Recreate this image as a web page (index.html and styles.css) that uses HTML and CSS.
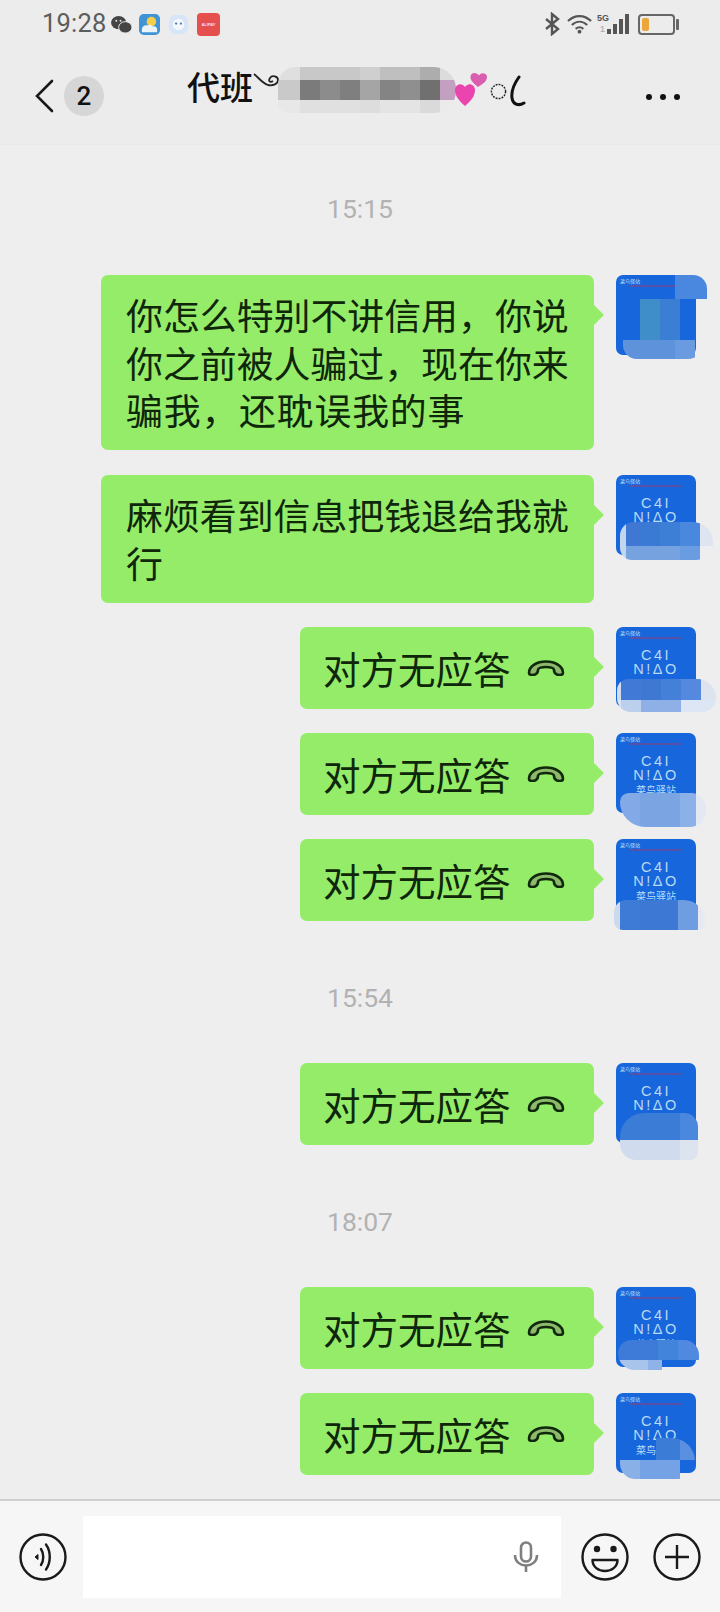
FILE: index.html
```html
<!DOCTYPE html>
<html lang="zh">
<head>
<meta charset="utf-8">
<title>代班</title>
<link rel="stylesheet" href="styles.css">
</head>
<body>
<div class="phone">
  <header class="top">
    <div class="status">
      <div class="status-left">
        <span class="clock">19:28</span>
        <svg class="s-wechat" viewBox="0 0 22 20"><ellipse cx="8" cy="8" rx="8" ry="7" fill="#444"/><ellipse cx="15" cy="13" rx="7" ry="6" fill="#444" stroke="#ededed"/><circle cx="5.500" cy="6" r="1" fill="#ededed"/><circle cx="10" cy="6" r="1" fill="#ededed"/></svg>
        <svg class="s-app" viewBox="0 0 22 22"><rect width="22" height="22" rx="5" fill="#3f93d6"/><circle cx="13" cy="8" r="5" fill="#f5cf4a"/><path d="M3 19v-3c0-3 3-5 6-4 1-1 4-1 5 1 3-1 5 1 5 3v3z" fill="#eaf3f8"/></svg>
        <svg class="s-app" viewBox="0 0 22 22"><rect x="1" y="1" width="20" height="20" rx="7" fill="#d6e5f7"/><ellipse cx="11" cy="11" rx="6" ry="6" fill="#f4f8fc"/><circle cx="8.500" cy="10" r="1.200" fill="#5577aa"/><circle cx="13.500" cy="10" r="1.200" fill="#5577aa"/></svg>
        <span class="s-red">ALIPAY</span>
      </div>
      <div class="status-right">
        <svg class="s-bt" viewBox="0 0 16 24"><path d="M2 7l12 10-6 5V2l6 5L2 17" fill="none" stroke="#555" stroke-width="2.400"/></svg>
        <svg class="s-wifi" viewBox="0 0 26 22"><g fill="none" stroke="#555" stroke-width="2.200"><path d="M1 8c7-7 17-7 24 0"/><path d="M5 12c5-4.500 11-4.500 16 0"/><path d="M9 16c2.500-2 5.500-2 8 0"/></g><circle cx="13" cy="19" r="2" fill="#555"/></svg>
        <span class="s-net">5G<i>1</i></span>
        <span class="s-bars"><i class="b1"></i><i class="b2"></i><i class="b3"></i><i class="b4"></i></span>
        <span class="s-batt"><i></i></span>
      </div>
    </div>
    <nav class="nav">
      <svg class="back" viewBox="0 0 20 34"><path d="M18 2L3 17l15 15" fill="none" stroke="#1a1a1a" stroke-width="2.600" stroke-linecap="round"/></svg>
      <span class="badge">2</span>
      <div class="title">
        <span class="title-text">代班</span>
        <svg class="swirl" viewBox="0 0 27 20"><path d="M1 2c4 3 8 9 14 11 5 1 10-1 10-5s-6-5-8-2 0 5 3 3" fill="none" stroke="#222" stroke-width="1.800"/></svg>
        <span class="mosaic"></span>
        <svg class="hearts" viewBox="0 0 32 36"><path d="M10 34C3 28 0 23 0 18c0-6 7-8 10-3 3-5 10-3 10 3 0 6-4 11-10 16z" fill="#ea45ae"/><path d="M23 15c-5-4-8-7-7.500-10.500C16 0 22 0 24 3.500 26 0 32 1 32 5c0 4-4 7-9 10z" fill="#db5db0"/></svg>
        <svg class="ring" viewBox="0 0 18 18"><circle cx="9" cy="9" r="7.500" fill="none" stroke="#222" stroke-width="1.500" stroke-dasharray="2 1.200"/></svg>
        <svg class="paren" viewBox="0 0 16 32"><path d="M9 2C4 9 1 16 2 23c1 7 7 8 12 5" fill="none" stroke="#111" stroke-width="3" stroke-linecap="round"/></svg>
      </div>
      <span class="more"><i></i><i></i><i></i></span>
    </nav>
  </header>

  <main class="chat">
    <p class="time">15:15</p>
    <section class="group">
      <div class="msg">
        <div class="bubble">你怎么特别不讲信用，你说你之前被人骗过，现在你来<span class="wide">骗我，还耽误我的事</span></div>
        <div class="avatar"><span class="tag">菜鸟驿站</span><span class="smear smear-a"></span></div>
      </div>
      <div class="msg">
        <div class="bubble">麻烦看到信息把钱退给我就行</div>
        <div class="avatar"><span class="tag">菜鸟驿站</span><span class="brand">C4I<br>N!ΔO</span><span class="smear smear-b"></span></div>
      </div>
      <div class="msg">
        <div class="bubble call">对方无应答<svg class="hang" viewBox="0 0 38 16"><path d="M2 13C2 6 10 1.500 19 1.500S36 6 36 13c0 2-3 2.500-6 1.500-2.500-1-3-2.500-3-4.500 0-2-4-3-8-3s-8 1-8 3c0 2-.5 3.500-3 4.500-3 1-6 .5-6-1.500z" fill="#8cb96a" stroke="#10280c" stroke-width="2.600"/></svg></div>
        <div class="avatar"><span class="tag">菜鸟驿站</span><span class="brand">C4I<br>N!ΔO<small>菜鸟驿站</small></span><span class="smear smear-c"></span></div>
      </div>
      <div class="msg">
        <div class="bubble call">对方无应答<svg class="hang" viewBox="0 0 38 16"><path d="M2 13C2 6 10 1.500 19 1.500S36 6 36 13c0 2-3 2.500-6 1.500-2.500-1-3-2.500-3-4.500 0-2-4-3-8-3s-8 1-8 3c0 2-.5 3.500-3 4.500-3 1-6 .5-6-1.500z" fill="#8cb96a" stroke="#10280c" stroke-width="2.600"/></svg></div>
        <div class="avatar"><span class="tag">菜鸟驿站</span><span class="brand">C4I<br>N!ΔO<small>菜鸟驿站</small></span><span class="smear smear-d"></span></div>
      </div>
      <div class="msg">
        <div class="bubble call">对方无应答<svg class="hang" viewBox="0 0 38 16"><path d="M2 13C2 6 10 1.500 19 1.500S36 6 36 13c0 2-3 2.500-6 1.500-2.500-1-3-2.500-3-4.500 0-2-4-3-8-3s-8 1-8 3c0 2-.5 3.500-3 4.500-3 1-6 .5-6-1.500z" fill="#8cb96a" stroke="#10280c" stroke-width="2.600"/></svg></div>
        <div class="avatar"><span class="tag">菜鸟驿站</span><span class="brand">C4I<br>N!ΔO<small>菜鸟驿站</small></span><span class="smear smear-e"></span></div>
      </div>
    </section>

    <p class="time">15:54</p>
    <section class="group">
      <div class="msg">
        <div class="bubble call">对方无应答<svg class="hang" viewBox="0 0 38 16"><path d="M2 13C2 6 10 1.500 19 1.500S36 6 36 13c0 2-3 2.500-6 1.500-2.500-1-3-2.500-3-4.500 0-2-4-3-8-3s-8 1-8 3c0 2-.5 3.500-3 4.500-3 1-6 .5-6-1.500z" fill="#8cb96a" stroke="#10280c" stroke-width="2.600"/></svg></div>
        <div class="avatar"><span class="tag">菜鸟驿站</span><span class="brand">C4I<br>N!ΔO<small>菜鸟驿站</small></span><span class="smear smear-f"></span></div>
      </div>
    </section>

    <p class="time">18:07</p>
    <section class="group">
      <div class="msg">
        <div class="bubble call">对方无应答<svg class="hang" viewBox="0 0 38 16"><path d="M2 13C2 6 10 1.500 19 1.500S36 6 36 13c0 2-3 2.500-6 1.500-2.500-1-3-2.500-3-4.500 0-2-4-3-8-3s-8 1-8 3c0 2-.5 3.500-3 4.500-3 1-6 .5-6-1.500z" fill="#8cb96a" stroke="#10280c" stroke-width="2.600"/></svg></div>
        <div class="avatar"><span class="tag">菜鸟驿站</span><span class="brand">C4I<br>N!ΔO<small>菜鸟驿站</small></span><span class="smear smear-g"></span></div>
      </div>
      <div class="msg">
        <div class="bubble call">对方无应答<svg class="hang" viewBox="0 0 38 16"><path d="M2 13C2 6 10 1.500 19 1.500S36 6 36 13c0 2-3 2.500-6 1.500-2.500-1-3-2.500-3-4.500 0-2-4-3-8-3s-8 1-8 3c0 2-.5 3.500-3 4.500-3 1-6 .5-6-1.500z" fill="#8cb96a" stroke="#10280c" stroke-width="2.600"/></svg></div>
        <div class="avatar"><span class="tag">菜鸟驿站</span><span class="brand">C4I<br>N!ΔO<small>菜鸟驿站</small></span><span class="smear smear-h"></span></div>
      </div>
    </section>
  </main>

  <footer class="bar">
    <svg class="tool" viewBox="0 0 48 48"><circle cx="24" cy="24" r="22.500" fill="none" stroke="#1a1a1a" stroke-width="2.400"/><path d="M19 21.500l-3 2.500 3 2.500z" fill="#1a1a1a" stroke="#1a1a1a"/><path d="M22 16c3 4.500 3 11.500 0 16" fill="none" stroke="#1a1a1a" stroke-width="2.400" stroke-linecap="round"/><path d="M27 11.500c5 7 5 18 0 25" fill="none" stroke="#1a1a1a" stroke-width="2.400" stroke-linecap="round"/></svg>
    <div class="input">
      <svg class="mic" viewBox="0 0 26 32"><rect x="8" y="1.500" width="10" height="19" rx="5" fill="none" stroke="#7f7f7f" stroke-width="2.600"/><path d="M2 14c0 14 22 14 22 0" fill="none" stroke="#7f7f7f" stroke-width="2.600"/><path d="M13 24v7" stroke="#7f7f7f" stroke-width="2.600"/></svg>
    </div>
    <svg class="tool tool-smile" viewBox="0 0 48 48"><circle cx="24" cy="24" r="22.500" fill="none" stroke="#1a1a1a" stroke-width="2.400"/><circle cx="16" cy="16" r="3.200" fill="#1a1a1a"/><circle cx="32.500" cy="16" r="3.200" fill="#1a1a1a"/><path d="M11.500 27h25c0 7-6 11-12.500 11s-12.500-4-12.500-11z" fill="none" stroke="#1a1a1a" stroke-width="2.400" stroke-linejoin="round"/></svg>
    <svg class="tool tool-plus" viewBox="0 0 48 48"><circle cx="24" cy="24" r="22.500" fill="none" stroke="#1a1a1a" stroke-width="2.400"/><path d="M12 24h24M24 12v24" stroke="#1a1a1a" stroke-width="2.400"/></svg>
  </footer>
</div>
</body>
</html>
```
FILE: styles.css
```css
* { box-sizing: border-box; }
html, body { margin: 0; padding: 0; }
body {
  width: 720px;
  height: 1612px;
  overflow: hidden;
  background: #eeeeef;
  font-family: "Noto Sans CJK SC", "Noto Sans", sans-serif;
  color: #141414;
}
.phone { display: flex; flex-direction: column; height: 1612px; }

/* header */
.top { height: 145px; background: #ececec; border-bottom: 1px solid #e8e8e8; flex: none; }
.status { height: 48px; display: flex; align-items: center; justify-content: space-between; padding: 0 40px 0 42px; }
.status-left, .status-right { display: flex; align-items: center; }
.clock { font: 400 25.500px/1 Roboto, sans-serif; color: #5c5c5c; letter-spacing: 0.2px; width: 69px; }
.s-wechat { width: 21px; height: 19px; margin-right: 7px; }
.s-app { width: 21px; height: 21px; margin-right: 8px; }
.s-red { width: 23px; height: 23px; border-radius: 4px; background: #e5504f; color: #fde; font: 700 4px/23px "Liberation Sans", sans-serif; text-align: center; overflow: hidden; }
.s-bt { width: 16px; height: 24px; margin-right: 7px; }
.s-wifi { width: 25px; height: 22px; margin-right: 5px; }
.s-net { width: 11px; height: 22px; margin-right: -1px; font: 700 9px/11px "Liberation Sans", sans-serif; color: #555; }
.s-net i { display: block; font-style: normal; color: #b5b5b5; text-align: center; }
.s-bars { display: flex; align-items: flex-end; gap: 2px; height: 20px; margin-right: 9px; }
.s-bars i { width: 4px; background: #555; display: block; }
.s-bars .b1 { height: 5px; }
.s-bars .b2 { height: 10px; }
.s-bars .b3 { height: 15px; }
.s-bars .b4 { height: 20px; }
.s-batt { position: relative; width: 37px; height: 21px; border: 2px solid #666; border-radius: 4px; padding: 2px; margin-right: 5px; }
.s-batt i { display: block; width: 7px; height: 13px; background: #eba73c; border-radius: 2px; }
.s-batt::after { content: ""; position: absolute; right: -6px; top: 3px; width: 3px; height: 11px; background: #666; border-radius: 1px; }

.nav { height: 96px; display: flex; align-items: center; padding: 0 0 0 34px; }
.back { width: 20px; height: 34px; flex: none; }
.badge { width: 40px; height: 40px; margin-left: 10px; border-radius: 50%; background: #d6d6d6; font: 500 26px/40px Roboto, sans-serif; text-align: center; color: #111; flex: none; }
.title { display: flex; align-items: center; margin-left: 83px; height: 60px; }
.title-text { font-size: 33px; font-weight: 500; line-height: 40px; color: #111; margin-top: -20px; }
.swirl { width: 27px; height: 20px; margin: -28px -2px 0 0; }
.mosaic {
  width: 178px;
  height: 46px;
  margin-top: -13px;
  border-radius: 18px 22px 22px 10px;
  background:
    linear-gradient(90deg, #dfdfdf 0 22px, #c8c8c8 22px 82px, #cfcfcf 82px 102px, #bfbfbf 102px 142px, #adadad 142px 162px, #dcdcdc 162px) 0 0 / 100% 13px no-repeat,
    linear-gradient(90deg, #c9c9c9 0 22px, #7b7b7b 22px 42px, #8c8c8c 42px 62px, #7f7f7f 62px 82px, #a5a5a5 82px 102px, #848484 102px 122px, #8f8f8f 122px 142px, #707070 142px 162px, #c39fc0 162px) 0 13px / 100% 20px no-repeat,
    linear-gradient(90deg, #e8e8e8 0 22px, #e0e0e0 22px 82px, #dddddd 82px 102px, #e4e4e4 102px 142px, #dadada 142px 162px, #ebebeb 162px) 0 33px / 100% 13px no-repeat;
}
.hearts { width: 32px; height: 36px; margin: -12px 0 0 -1px; }
.ring { width: 17px; height: 17px; margin: -10px 0 0 3px; }
.paren { width: 16px; height: 32px; margin: -10px 0 0 3px; }
.more { margin: 2px 40px 0 auto; display: flex; gap: 8px; }
.more i { width: 6px; height: 6px; border-radius: 50%; background: #111; display: block; }

/* chat */
.chat { flex: 1; padding-top: 46px; overflow: hidden; }
.time { margin: 0 0 47.500px; height: 36px; text-align: center; font: 400 26.500px/36px Roboto, sans-serif; color: #b2b2b2; }
.group { display: flex; flex-direction: column; gap: 24.500px; margin-bottom: 59px; }
.msg { display: flex; justify-content: flex-end; align-items: flex-start; padding-right: 24px; }
.bubble {
  position: relative;
  width: 493px;
  margin-right: 22px;
  padding: 16.500px 20px 16.500px 25px;
  background: #95ec69;
  border-radius: 7px;
  font-size: 36.900px;
  line-height: 47.500px;
  color: #0f260b;
}
.wide { letter-spacing: 0.800px; }
.bubble::after {
  content: "";
  position: absolute;
  right: -10px;
  top: 30px;
  border-left: 10px solid #95ec69;
  border-top: 10px solid transparent;
  border-bottom: 10px solid transparent;
}
.call { width: 294px; display: flex; align-items: center; white-space: nowrap; padding: 17px 26px 17px 23px; font-size: 37.500px; }
.hang { width: 38px; height: 16px; margin-left: 16px; flex: none; }

.avatar {
  position: relative;
  width: 80px;
  height: 80px;
  flex: none;
  border-radius: 7px;
  background: #1766dc;
  text-align: center;
  padding-top: 21px;
}
.avatar::after {
  content: "";
  position: absolute;
  left: 14px;
  top: 10px;
  width: 52px;
  height: 2px;
  background: rgba(190, 50, 90, 0.4);
}
.tag { position: absolute; left: 4px; top: 3px; font-size: 5px; line-height: 6px; color: #cfe2fa; }
.brand { display: block; font: 400 14.500px/14px "Liberation Sans", sans-serif; color: #b9daf5; letter-spacing: 2.500px; }
.brand small { display: block; font: 400 10px/12px "Noto Sans CJK SC", sans-serif; letter-spacing: 0; margin-top: 2px; }

.smear { position: absolute; display: block; z-index: 1; }
.smear-a {
  left: 7px; top: 0; width: 84px; height: 84px;
  border-radius: 22px 14px 20px 14px;
  background:
    linear-gradient(90deg, transparent 0 52px, #4a87de 52px) 0 0 / 100% 24px no-repeat,
    linear-gradient(90deg, transparent 0 17px, #3f8dc9 17px 37px, #3a7fd4 37px 57px, transparent 57px) 0 24px / 100% 41px no-repeat,
    linear-gradient(90deg, #5e93dc 0 52px, #6a9ae0 52px 72px, transparent 72px) 0 65px / 100% 19px no-repeat;
}
.smear-b {
  left: 4px; top: 47px; width: 93px; height: 38px;
  border-radius: 20px 30px 26px 18px;
  background:
    linear-gradient(90deg, #c4d6ee 0 6px, #3f77d2 6px 20px, #3a79d4 20px 40px, #3d7ed6 40px 60px, #4a88de 60px 80px, #dfe5f0 80px) 0 0 / 100% 24px no-repeat,
    linear-gradient(90deg, #c4d6ee 0 6px, #77a2e0 6px 60px, #6a9ce2 60px 80px, #eeeef2 80px) 0 24px / 100% 14px no-repeat;
}
.smear-c {
  left: 1px; top: 52px; width: 99px; height: 33px;
  border-radius: 18px 30px 22px 22px;
  background:
    linear-gradient(90deg, #d2ddee 0 4px, #4079d6 4px 24px, #3e78d2 24px 44px, #447fd8 44px 64px, #5489df 64px 84px, #dde3ef 84px) 0 0 / 100% 21px no-repeat,
    linear-gradient(90deg, #dbe4f2 0 4px, #bcd0ee 4px 24px, #8eb0e6 24px 64px, #dde6f4 64px) 0 21px / 100% 12px no-repeat;
}
.smear-d {
  left: 4px; top: 60px; width: 86px; height: 34px;
  border-radius: 14px 24px 26px 40px;
  background: linear-gradient(90deg, #83aae6 0 20px, #7ba4e2 20px 60px, #8cb0e8 60px 76px, #e3e8f2 76px);
}
.smear-e {
  left: -2px; top: 61px; width: 91px; height: 30px;
  border-radius: 14px 24px 10px 10px;
  background: linear-gradient(90deg, #cdd9ec 0 6px, #3d7bd6 6px 26px, #3c78d4 26px 64px, #6e9de2 64px 84px, #e6e9f1 84px);
}
.smear-f {
  left: 4px; top: 50px; width: 78px; height: 47px;
  border-radius: 24px 14px 8px 16px;
  background:
    linear-gradient(90deg, #3b7cd6 0 60px, #4a88de 60px) 0 0 / 100% 27px no-repeat,
    linear-gradient(90deg, #d0dcee 0 60px, #dde4f0 60px) 0 27px / 100% 20px no-repeat;
}
.smear-g {
  left: 2px; top: 53px; width: 81px; height: 30px;
  border-radius: 16px 18px 14px 20px;
  background:
    linear-gradient(90deg, #3e7bd8 0 40px, #4283dc 40px 60px, #4f8ae0 60px) 0 0 / 100% 20px no-repeat,
    linear-gradient(90deg, #a8c4ea 0 30px, #8fb2e8 30px 44px, transparent 44px) 0 20px / 100% 10px no-repeat;
}
.smear-h {
  left: 4px; top: 45px; width: 75px; height: 41px;
  border-radius: 16px 24px 18px 16px;
  background:
    linear-gradient(90deg, transparent 0 36px, #3b7cd6 36px 60px, #5a90e0 60px) 0 0 / 100% 22px no-repeat,
    linear-gradient(90deg, #8ab0e8 0 20px, #75a2e4 20px 60px, transparent 60px) 0 22px / 100% 19px no-repeat;
}

/* footer */
.bar {
  height: 113px;
  flex: none;
  background: #f6f6f6;
  border-top: 2px solid #cfcfcf;
  display: flex;
  align-items: center;
  padding: 0 19px 0 19px;
}
.tool { width: 48px; height: 48px; flex: none; }
.input {
  width: 478px;
  height: 82px;
  margin-left: 16px;
  background: #fff;
  display: flex;
  align-items: center;
  justify-content: flex-end;
  padding-right: 22px;
}
.mic { width: 26px; height: 32px; }
.tool-smile { margin-left: 20px; }
.tool-plus { margin-left: 24px; }
```
